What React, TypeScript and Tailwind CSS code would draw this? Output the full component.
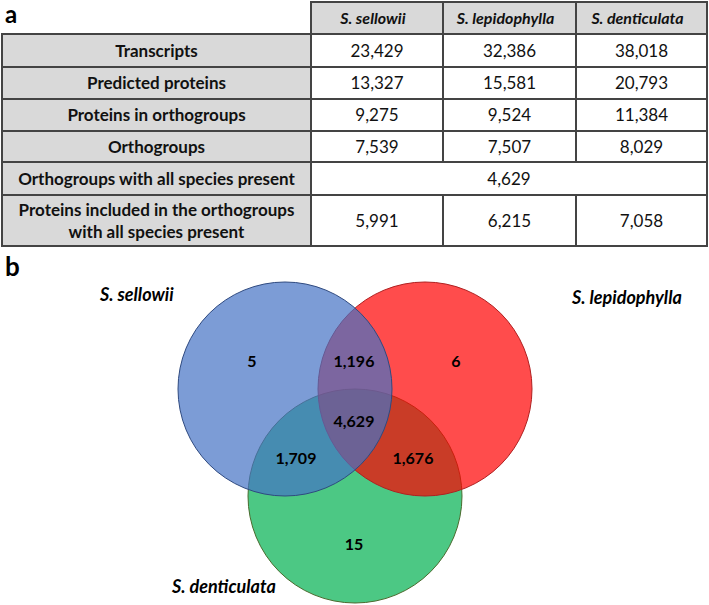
import React from "react";

const rows = [
  { label: "Transcripts", values: ["23,429", "32,386", "38,018"], h: "h-[33px]" },
  { label: "Predicted proteins", values: ["13,327", "15,581", "20,793"], h: "h-[32px]" },
  { label: "Proteins in orthogroups", values: ["9,275", "9,524", "11,384"], h: "h-[32px]" },
  { label: "Orthogroups", values: ["7,539", "7,507", "8,029"], h: "h-[31px]" },
];

const species = ["S. sellowii", "S. lepidophylla", "S. denticulata"];

function Table() {
  return (
    <table className="table-fixed border-collapse ml-[1px] mt-[1px] text-[17px] text-[#111]">
      <colgroup>
        <col className="w-[309px]" />
        <col className="w-[132px]" />
        <col className="w-[133px]" />
        <col className="w-[131px]" />
      </colgroup>
      <thead>
        <tr className="h-[32px]">
          <th className="align-top text-left pl-[3px] pt-[4px]">
            <span className="block text-[24px] font-bold text-black leading-[16px]">a</span>
          </th>
          {species.map((s) => (
            <th key={s} className="border-2 border-[#444] bg-[#d9d9d9] font-bold italic text-[16px] pr-[8px]">
              {s}
            </th>
          ))}
        </tr>
      </thead>
      <tbody>
        {rows.map((r) => (
          <tr key={r.label} className={r.h}>
            <td className="border-2 border-[#444] bg-[#d9d9d9] font-bold text-center">{r.label}</td>
            {r.values.map((v, i) => (
              <td key={i} className="border-2 border-[#444] text-center">
                {v}
              </td>
            ))}
          </tr>
        ))}
        <tr className="h-[33px]">
          <td className="border-2 border-[#444] bg-[#d9d9d9] font-bold text-center">
            Orthogroups with all species present
          </td>
          <td colSpan={3} className="border-2 border-[#444] text-center">
            4,629
          </td>
        </tr>
        <tr className="h-[51px]">
          <td className="border-2 border-[#444] bg-[#d9d9d9] font-bold text-center leading-[22px]">
            Proteins included in the orthogroups
            <br />
            with all species present
          </td>
          {["5,991", "6,215", "7,058"].map((v) => (
            <td key={v} className="border-2 border-[#444] text-center">
              {v}
            </td>
          ))}
        </tr>
      </tbody>
    </table>
  );
}

function Venn() {
  const num = "font-bold text-[16px]";
  return (
    <svg width="679" height="358" viewBox="30 247 679 358" className="block">
      <circle cx="355" cy="496" r="107" fill="#00B050" fillOpacity="0.7" stroke="#4a6b2e" strokeWidth="1" />
      <circle cx="425" cy="389" r="107" fill="#FF0000" fillOpacity="0.7" stroke="#b02020" strokeWidth="1" />
      <circle cx="285" cy="389" r="107" fill="#4472C4" fillOpacity="0.7" stroke="#2f4a80" strokeWidth="1" />
      <g fill="#000" textAnchor="middle" fontFamily="Lato, 'Open Sans', sans-serif">
        <text x="252" y="367" className={num}>5</text>
        <text x="354" y="367" className={num}>1,196</text>
        <text x="456" y="367" className={num}>6</text>
        <text x="354" y="427" className={num}>4,629</text>
        <text x="296" y="464" className={num}>1,709</text>
        <text x="413" y="464" className={num}>1,676</text>
        <text x="354" y="550" className={num}>15</text>
      </g>
      <g fill="#000" fontFamily="Lato, 'Open Sans', sans-serif" className="font-bold italic text-[18px]">
        <text x="100" y="301">S. sellowii</text>
        <text x="572" y="304">S. lepidophylla</text>
        <text x="172" y="593">S. denticulata</text>
      </g>
    </svg>
  );
}

export default function App() {
  return (
    <div className="w-[709px] h-[605px] bg-white overflow-hidden font-['Lato','Open_Sans',sans-serif]">
      <Table />
      <div className="flex">
        <div className="w-[30px] pl-[5px] pt-[6px] text-[26px] font-bold leading-none text-black">b</div>
        <Venn />
      </div>
    </div>
  );
}
